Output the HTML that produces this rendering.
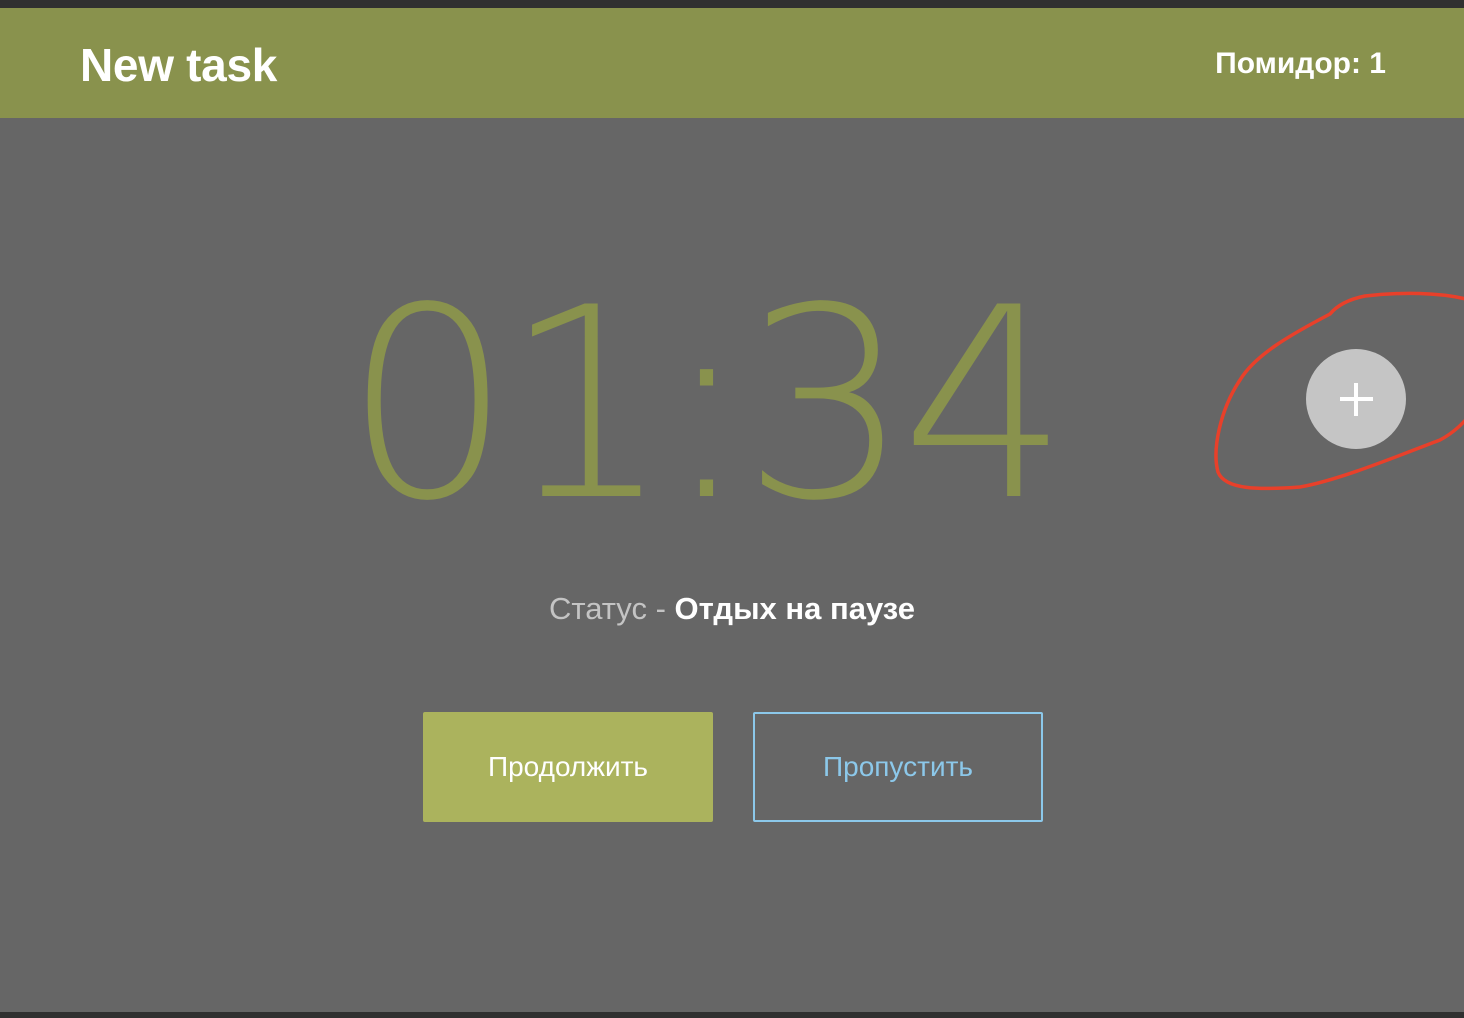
<!DOCTYPE html>
<html><head><meta charset="utf-8"><style>
body{margin:0;width:1464px;height:1018px;background:#666;position:relative;overflow:hidden;font-family:"Liberation Sans",sans-serif}
.top{position:absolute;left:0;top:0;width:1464px;height:8px;background:#303030}
.hdr{position:absolute;left:0;top:8px;width:1464px;height:110px;background:#89924d}
.title{position:absolute;left:80px;top:30px;color:#fff;font-weight:bold;font-size:46px;letter-spacing:-0.3px}
.pom{position:absolute;right:78px;top:39px;color:#fff;font-weight:bold;font-size:30px}
.st{position:absolute;left:0;width:1464px;top:591px;text-align:center;font-size:31px;color:#c4c4c4}
.st b{color:#fff}
.b1{position:absolute;left:423px;top:712px;width:290px;height:110px;background:#abb35d;border-radius:2px;color:#fff;font-size:28px;text-align:center;line-height:110px}
.b2{position:absolute;left:753px;top:712px;width:286px;height:106px;border:2px solid #8cc8ea;border-radius:2px;color:#8cc8ea;font-size:28px;text-align:center;line-height:106px}
.plus{position:absolute;left:1306px;top:349px;width:100px;height:100px;border-radius:50%;background:#c5c5c5}
.bot{position:absolute;left:0;top:1012px;width:1464px;height:6px;background:#303030}
</style></head><body>
<div class="top"></div>
<div class="hdr"><div class="title">New task</div><div class="pom">Помидор: 1</div></div>
<svg style="position:absolute;left:0;top:0" width="1464" height="1018"><text x="702" y="496" text-anchor="middle" font-family="'DejaVu Sans ExtraLight','DejaVu Sans',sans-serif" font-weight="200" font-size="264" letter-spacing="-9" fill="#89924d">01:34</text></svg>
<div class="plus"><svg width="100" height="100"><path d="M50 34V67M34 50H67" stroke="#fff" stroke-width="4"/></svg></div>
<svg style="position:absolute;left:0;top:0" width="1464" height="1018"><path d="M1470 300C1440 292 1400 292 1365 296 1345 300 1335 308 1330 314 1290 335 1255 355 1240 380 1220 410 1212 450 1218 472 1225 490 1260 490 1300 487 1340 480 1400 455 1440 440 1455 432 1464 422 1470 415" fill="none" stroke="#e8402a" stroke-width="3.5" stroke-linecap="round"/></svg>
<div class="st">Статус - <b>Отдых на паузе</b></div>
<div class="b1">Продолжить</div>
<div class="b2">Пропустить</div>
<div class="bot"></div>
</body></html>
